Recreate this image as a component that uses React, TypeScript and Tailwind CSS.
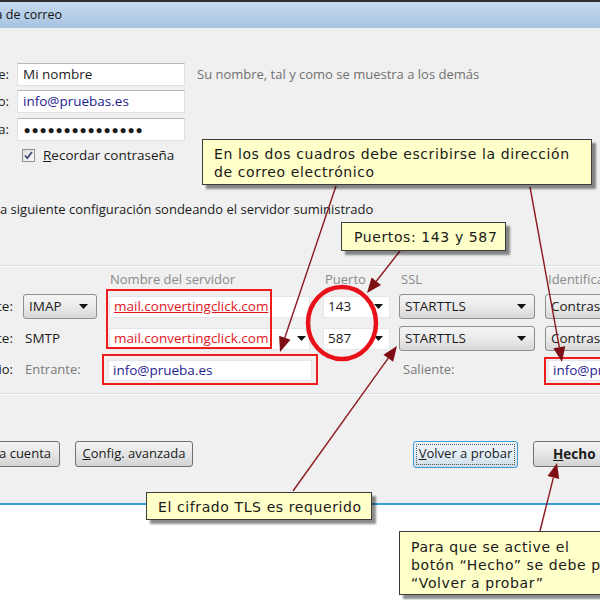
import React from 'react';

const Arrow = () => (
  <svg width="9" height="5" viewBox="0 0 9 5" className="shrink-0">
    <path d="M0 0h9L4.5 5z" fill="#111" />
  </svg>
);

const Clip = ({ width, children }: { width: string; children: React.ReactNode }) => (
  <div className={`${width} shrink-0 flex justify-end overflow-hidden whitespace-nowrap`}>{children}</div>
);

const callouts = [
  { cls: 'left-[202px] top-[139px] w-[390px] h-[46px] pl-[11px] pt-[5px]', lines: ['En los dos cuadros debe escribirse la dirección', 'de correo electrónico'] },
  { cls: 'left-[341px] top-[222px] w-[165px] h-[29px] pl-[12px] pt-[5px]', lines: ['Puertos: 143 y 587'] },
  { cls: 'left-[146px] top-[492px] w-[226px] h-[28px] pl-[11px] pt-[5px]', lines: ['El cifrado TLS es requerido'] },
  { cls: 'left-[399px] top-[531px] w-[230px] h-[64px] pl-[11px] pt-[6px]', lines: ['Para que se active el', 'botón “Hecho” se debe pulsar', '“Volver a probar”'] },
];

const arrows = [
  [336, 186, 280, 352],
  [530, 187, 562, 362],
  [400, 251, 367, 293],
  [293, 491, 397, 346],
  [540, 531, 557, 463],
];

function head(x1: number, y1: number, x2: number, y2: number) {
  const a = Math.atan2(y2 - y1, x2 - x1);
  const len = 15;
  const half = 6;
  const bx = x2 - len * Math.cos(a);
  const by = y2 - len * Math.sin(a);
  const px = -Math.sin(a) * half;
  const py = Math.cos(a) * half;
  return { pts: `${x2},${y2} ${bx + px},${by + py} ${bx - px},${by - py}`, bx, by };
}

export default function App() {
  return (
    <div className="relative w-[600px] h-[600px] overflow-hidden bg-white text-[13px] text-[#1b1b1b] font-['Open_Sans',sans-serif]">
      {/* title bar */}
      <div className="h-[28px] border-t-2 border-[#303030] bg-linear-to-b from-[#c6daef] to-[#a7c3e1] flex items-center">
        <Clip width="w-[62px]">
          <span className="text-[12.5px] text-[#111]">Configuración de cuenta de correo</span>
        </Clip>
      </div>

      {/* dialog body */}
      <div className="h-[477px] bg-[#f0f0f0] border-b-2 border-[#2f9fd6] flex flex-col">
        <div className="pt-[35px] flex flex-col">
          <div className="flex items-center h-[23px]">
            <Clip width="w-[9px]">Su nombre:</Clip>
            <div className="ml-[8px] w-[168px] h-[23px] bg-white border border-[#dde1e6] border-t-[#b4b7bd] flex items-center px-[5px] text-[13.5px]">Mi nombre</div>
            <span className="ml-[12px] text-[#707070] whitespace-nowrap">Su nombre, tal y como se muestra a los demás</span>
          </div>
          <div className="flex items-center h-[23px] mt-[4px]">
            <Clip width="w-[9px]">Dirección de correo:</Clip>
            <div className="ml-[8px] w-[168px] h-[23px] bg-white border border-[#dde1e6] border-t-[#b4b7bd] flex items-center px-[5px] text-[13.5px] text-[#1d1d8f]">info@pruebas.es</div>
          </div>
          <div className="flex items-center h-[23px] mt-[5px]">
            <Clip width="w-[9px]">Contraseña:</Clip>
            <div className="ml-[8px] w-[168px] h-[23px] bg-white border border-[#dde1e6] border-t-[#b4b7bd] flex items-center px-[5px] text-[12px] font-['Liberation_Sans',sans-serif]">
              {Array.from({ length: 15 }).map((_, i) => (
                <span key={i} className="inline-block w-[8px] text-center">●</span>
              ))}
            </div>
          </div>
          <div className="flex items-center h-[14px] mt-[7px]">
            <div className="ml-[22px] w-[13px] h-[13px] border border-[#8f8f8f] bg-linear-to-br from-[#dcdcdc] to-[#fbfbfb] flex items-center justify-center">
              <svg width="9" height="9" viewBox="0 0 9 9">
                <path d="M1 4.5l2.3 2.6L8 1" stroke="#3b4a7a" strokeWidth="1.7" fill="none" />
              </svg>
            </div>
            <span className="ml-[8px] whitespace-nowrap text-[13.5px]"><u>R</u>ecordar contraseña</span>
          </div>
          <div className="mt-[38px] h-[18px] leading-[18px] whitespace-nowrap">a siguiente configuración sondeando el servidor suministrado</div>
          <div className="mt-[47px] h-[2px] border-t border-[#d5dbe2] border-b border-b-white" />

          {/* column headers */}
          <div className="flex items-center mt-[4px] h-[18px] text-[#8a8a8a] whitespace-nowrap">
            <div className="w-[13px] shrink-0" />
            <div className="ml-[10px] w-[74px] shrink-0" />
            <div className="ml-[12px] w-[201px] shrink-0 pl-[1px]">Nombre del servidor</div>
            <div className="ml-[13px] w-[67px] shrink-0 pl-[2px]">Puerto</div>
            <div className="ml-[9px] w-[136px] shrink-0 pl-[2px]">SSL</div>
            <div className="ml-[10px] w-[130px] shrink-0 pl-[3px]">Identificación</div>
          </div>

          {/* incoming */}
          <div className="flex items-center mt-[5px] h-[25px] whitespace-nowrap text-[13.5px]">
            <Clip width="w-[13px]">Entrante:</Clip>
            <div className="ml-[10px] w-[74px] h-[25px] shrink-0 rounded-[3px] border border-[#8e8f8f] bg-linear-to-b from-[#f5f5f5] via-[#eaeaea] to-[#d7d7d7] flex items-center justify-between pl-[5px] pr-[8px]">
              IMAP <Arrow />
            </div>
            <div className="ml-[12px] w-[201px] h-[22px] shrink-0 bg-white border border-[#e3e6ea] flex items-center pl-[4px] text-[#e3141c] underline">mail.convertingclick.com</div>
            <div className="ml-[13px] w-[67px] h-[22px] shrink-0 bg-white border border-[#e3e6ea] flex items-center justify-between pl-[4px] pr-[6px]">
              143 <Arrow />
            </div>
            <div className="ml-[9px] w-[136px] h-[25px] shrink-0 rounded-[3px] border border-[#8e8f8f] bg-linear-to-b from-[#f5f5f5] via-[#eaeaea] to-[#d7d7d7] flex items-center justify-between pl-[5px] pr-[8px]">
              STARTTLS <Arrow />
            </div>
            <div className="ml-[10px] w-[130px] h-[25px] shrink-0 rounded-[3px] border border-[#8e8f8f] bg-linear-to-b from-[#f5f5f5] via-[#eaeaea] to-[#d7d7d7] flex items-center pl-[5px]">
              Contraseña normal
            </div>
          </div>

          {/* outgoing */}
          <div className="flex items-center mt-[7px] h-[25px] whitespace-nowrap text-[13.5px]">
            <Clip width="w-[13px]">Saliente:</Clip>
            <div className="ml-[10px] w-[74px] shrink-0 pl-[2px]">SMTP</div>
            <div className="ml-[12px] w-[201px] h-[22px] shrink-0 bg-white border border-[#e3e6ea] flex items-center justify-between pl-[4px] pr-[3px] text-[#e3141c]">
              mail.convertingclick.com <Arrow />
            </div>
            <div className="ml-[13px] w-[67px] h-[22px] shrink-0 bg-white border border-[#e3e6ea] flex items-center justify-between pl-[4px] pr-[6px]">
              587 <Arrow />
            </div>
            <div className="ml-[9px] w-[136px] h-[25px] shrink-0 rounded-[3px] border border-[#8e8f8f] bg-linear-to-b from-[#f5f5f5] via-[#eaeaea] to-[#d7d7d7] flex items-center justify-between pl-[5px] pr-[8px]">
              STARTTLS <Arrow />
            </div>
            <div className="ml-[10px] w-[130px] h-[25px] shrink-0 rounded-[3px] border border-[#8e8f8f] bg-linear-to-b from-[#f5f5f5] via-[#eaeaea] to-[#d7d7d7] flex items-center pl-[5px]">
              Contraseña normal
            </div>
          </div>

          {/* username */}
          <div className="flex items-center mt-[6px] h-[26px] whitespace-nowrap">
            <Clip width="w-[13px]">Nombre de usuario:</Clip>
            <div className="ml-[10px] w-[74px] shrink-0 pl-[2px] text-[#7a7a7a]">Entrante:</div>
            <div className="ml-[11px] w-[204px] h-[21px] shrink-0 bg-white border border-[#e3e6ea] flex items-center pl-[4px] text-[13.5px] text-[#1d1d8f]">info@prueba.es</div>
            <div className="ml-[89px] w-[136px] shrink-0 pl-[2px] text-[#7a7a7a]">Saliente:</div>
            <div className="ml-[11px] w-[130px] h-[21px] shrink-0 bg-white border border-[#e3e6ea] flex items-center pl-[4px] text-[13.5px] text-[#1d1d8f]">info@prueba.es</div>
          </div>

          <div className="mt-[10px] h-[2px] border-t border-[#d5dbe2] border-b border-b-white" />

          {/* buttons */}
          <div className="flex items-center mt-[46px] h-[26px] whitespace-nowrap">
            <Clip width="w-[60px]">
              <div className="h-[26px] px-[8px] rounded-[3px] border border-[#707070] bg-linear-to-b from-[#f3f3f3] via-[#e6e6e6] to-[#d3d3d3] flex items-center">Obtener otra cuenta</div>
            </Clip>
            <div className="ml-[15px] w-[118px] h-[26px] shrink-0 rounded-[3px] border border-[#707070] bg-linear-to-b from-[#f3f3f3] via-[#e6e6e6] to-[#d3d3d3] flex items-center justify-center">
              <span><u>C</u>onfig. avanzada</span>
            </div>
            <div className="ml-[220px] w-[105px] h-[27px] shrink-0 rounded-[3px] border border-[#3c9ad8] bg-linear-to-b from-[#eef6fb] via-[#e3eef6] to-[#cfdde8] flex items-center justify-center p-[2px]">
              <span className="w-full h-full flex items-center justify-center border border-dotted border-[#555]"><u>V</u>olver a probar</span>
            </div>
            <div className="ml-[15px] w-[100px] h-[26px] shrink-0 rounded-[3px] border border-[#707070] bg-linear-to-b from-[#f3f3f3] via-[#e6e6e6] to-[#d3d3d3] flex items-center pl-[19px] font-bold text-[13.5px]">
              <span><u>H</u>echo</span>
            </div>
          </div>
        </div>
      </div>

      {/* annotation red boxes */}
      <div className="absolute left-[106px] top-[289px] w-[166px] h-[60px] border-2 border-[#ee1c1c]" />
      <div className="absolute left-[102px] top-[354px] w-[216px] h-[31px] border-2 border-[#ee1c1c]" />
      <div className="absolute left-[544px] top-[357px] w-[70px] h-[28px] border-2 border-[#ee1c1c]" />

      {/* arrows + circle */}
      <svg className="absolute left-0 top-0" width="600" height="600">
        <ellipse cx="342" cy="323" rx="34" ry="36" fill="none" stroke="#e8111a" strokeWidth="4.5" />
        {arrows.map(([x1, y1, x2, y2], i) => {
          const h = head(x1, y1, x2, y2);
          return (
            <g key={i}>
              <line x1={x1} y1={y1} x2={h.bx} y2={h.by} stroke="#8b1a1f" strokeWidth="1.4" />
              <polygon points={h.pts} fill="#7d0f14" />
            </g>
          );
        })}
      </svg>

      {/* callouts */}
      {callouts.map((c, i) => (
        <div
          key={i}
          className={`absolute ${c.cls} bg-[#ffffc9] border border-[#3b3b3b] shadow-[4px_4px_2px_rgba(0,0,0,0.45)] font-['DejaVu_Sans',sans-serif] text-[14px] leading-[18px] tracking-[0.6px] text-[#1a1a1a] whitespace-nowrap overflow-hidden`}
        >
          {c.lines.map((l, j) => (
            <div key={j}>{l}</div>
          ))}
        </div>
      ))}
    </div>
  );
}
